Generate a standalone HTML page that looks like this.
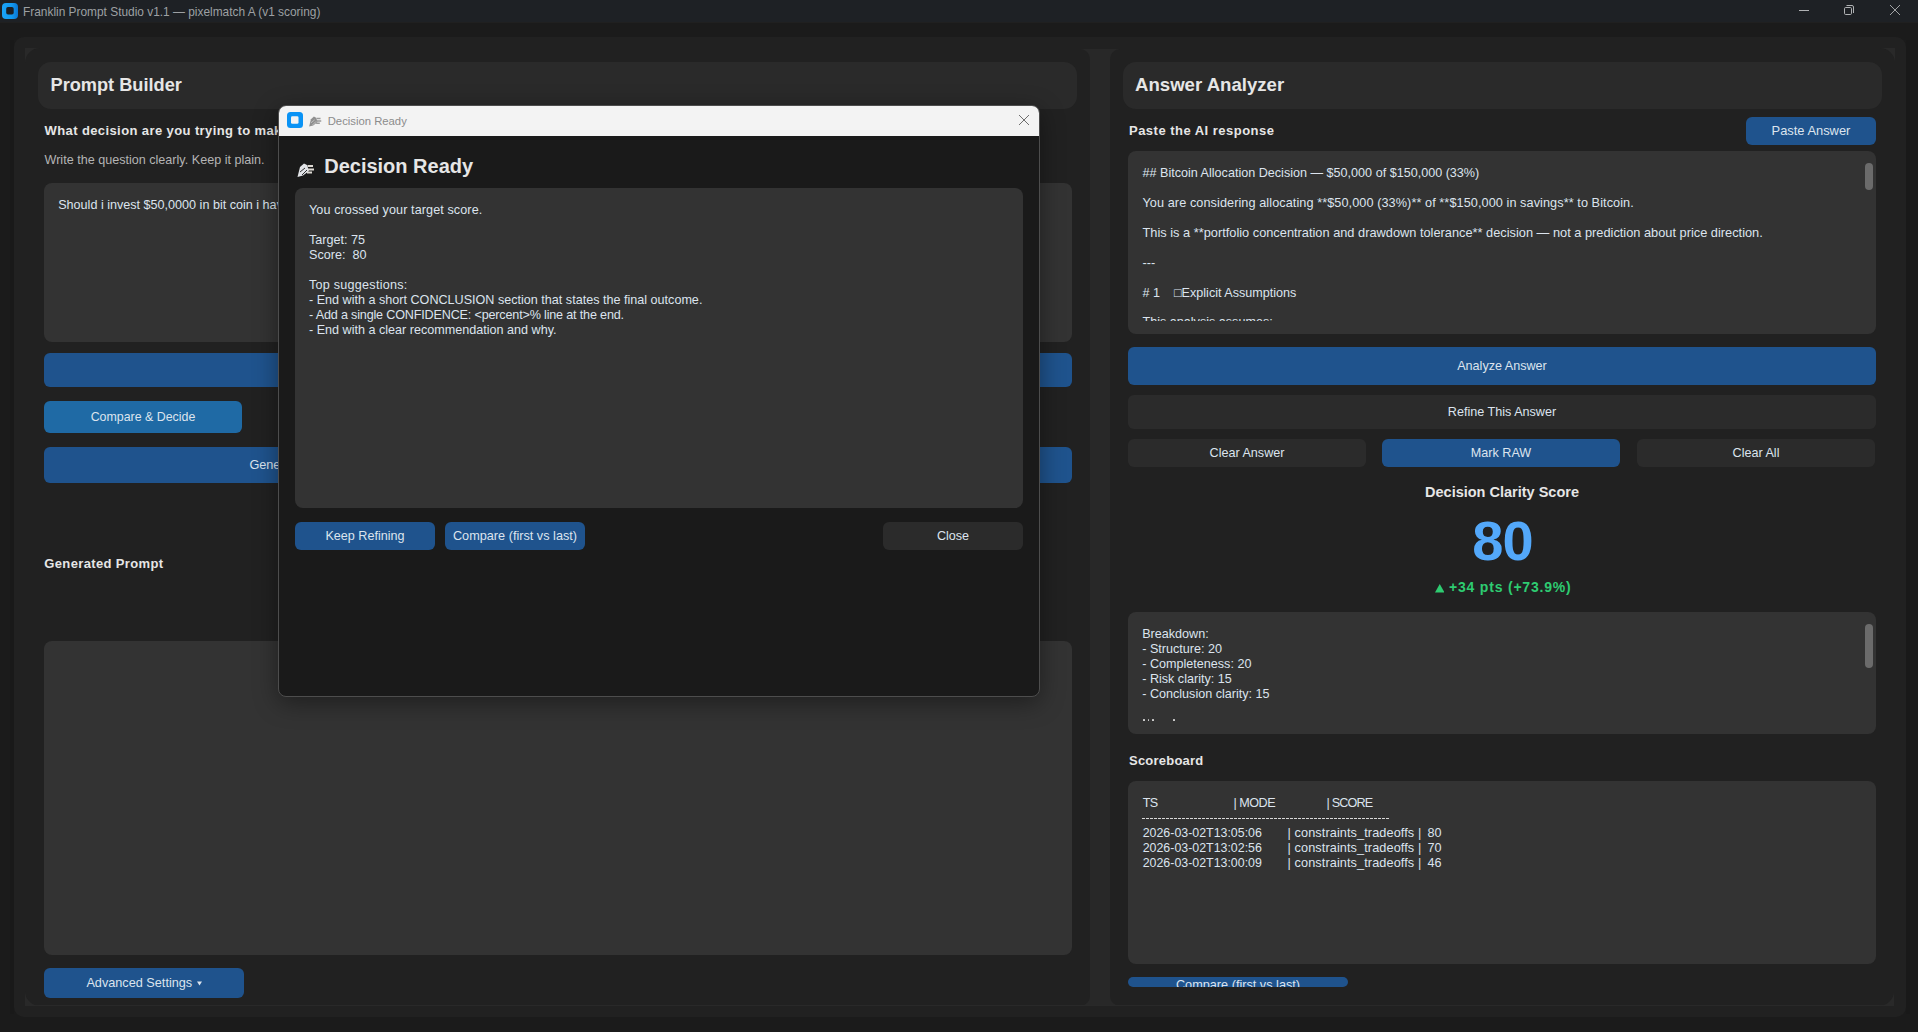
<!DOCTYPE html>
<html><head><meta charset="utf-8"><style>
html,body{margin:0;padding:0;width:1918px;height:1032px;overflow:hidden;background:#1b1b1b;font-family:"Liberation Sans",sans-serif}
body>div,body>svg{position:absolute}
.t{position:absolute;white-space:pre;line-height:20px}
</style></head><body>
<div style="left:0px;top:0px;width:1918px;height:23px;background:#1e2125;border-radius:0px;"></div>
<div style="left:0px;top:22px;width:1918px;height:1px;background:#202020;border-radius:0px;"></div>
<svg style="left:2px;top:3px" width="16" height="16" viewBox="0 0 16 16"><defs><linearGradient id="ig" x1="0" x2="1"><stop offset="0" stop-color="#1aa3f7"/><stop offset="0.6" stop-color="#1299f0"/><stop offset="1" stop-color="#0b76d2"/></linearGradient></defs><rect x="0" y="0" width="16" height="16" rx="4" fill="url(#ig)"/><rect x="4.2" y="4" width="7.5" height="7.5" rx="1.8" fill="#1c1f24"/></svg>
<div class="t" style="left:23.00px;top:2.00px;font-size:11.9px;font-weight:400;color:#9da0a3;">Franklin Prompt Studio v1.1 — pixelmatch A (v1 scoring)</div>
<svg style="left:1790px;top:0" width="128" height="23" viewBox="0 0 128 23"><line x1="9" y1="10.5" x2="19" y2="10.5" stroke="#b0b2b4" stroke-width="1"/><rect x="54.5" y="7.5" width="7" height="7" rx="1.2" fill="none" stroke="#b0b2b4" stroke-width="1"/><path d="M56.5 5.5 H62 a1.5 1.5 0 0 1 1.5 1.5 V13" fill="none" stroke="#b0b2b4" stroke-width="1"/><path d="M100 5 L110 15 M110 5 L100 15" stroke="#b0b2b4" stroke-width="0.9"/></svg>
<div style="left:10px;top:40px;width:4px;height:974px;background:#191919;border-radius:0px;"></div>
<div style="left:1906px;top:40px;width:4px;height:974px;background:#191919;border-radius:0px;"></div>
<div style="left:14px;top:37px;width:1892px;height:980px;background:#212121;border-radius:10px;"></div>
<div style="left:1074px;top:49px;width:52px;height:957px;background:#282828;border-radius:0px;"></div>
<div style="left:26px;top:49px;width:1064px;height:957px;background:#212121;border-radius:10px;"></div>
<div style="left:1110px;top:49px;width:784px;height:957px;background:#212121;border-radius:10px;"></div>
<div style="left:26px;top:1005px;width:1868px;height:1px;background:#292929;border-radius:0px;"></div>
<svg style="left:25px;top:48px;transform:scale(1,1)" width="15" height="15" viewBox="0 0 15 15"><path d="M0 0 H15 A15 15 0 0 0 0 15 Z" fill="#292929"/></svg>
<svg style="left:1880px;top:48px;transform:scale(-1,1)" width="15" height="15" viewBox="0 0 15 15"><path d="M0 0 H15 A15 15 0 0 0 0 15 Z" fill="#292929"/></svg>
<svg style="left:25px;top:991px;transform:scale(1,-1)" width="15" height="15" viewBox="0 0 15 15"><path d="M0 0 H15 A15 15 0 0 0 0 15 Z" fill="#292929"/></svg>
<svg style="left:1879px;top:991px;transform:scale(-1,-1)" width="15" height="15" viewBox="0 0 15 15"><path d="M0 0 H15 A15 15 0 0 0 0 15 Z" fill="#292929"/></svg>
<div style="left:38px;top:62px;width:1039px;height:47px;background:#2a2a2a;border-radius:13px;"></div>
<div class="t" style="left:50.50px;top:75.00px;font-size:18.2px;font-weight:700;color:#e6e6e6;">Prompt Builder</div>
<div class="t" style="left:44.50px;top:121.00px;font-size:13px;font-weight:700;color:#e6e6e6;letter-spacing:0.4px">What decision are you trying to make?</div>
<div class="t" style="left:44.50px;top:150.00px;font-size:12.6px;font-weight:400;color:#b4b4b4;">Write the question clearly. Keep it plain.</div>
<div style="left:44px;top:183px;width:1028px;height:159px;background:#333333;border-radius:8px;"></div>
<div class="t" style="left:58.20px;top:195.00px;font-size:12.6px;font-weight:400;color:#dce4ee;">Should i invest $50,0000 in bit coin i have $150,000 in savings</div>
<div style="left:44px;top:353px;width:1028px;height:34px;background:#1f538d;border-radius:6px;"></div>
<div style="left:44px;top:401px;width:198px;height:32px;background:#1f6aa5;border-radius:6px;"></div>
<div class="t" style="left:43.00px;top:407.00px;width:200px;text-align:center;font-size:12.4px;font-weight:400;color:#dce4ee;">Compare &amp; Decide</div>
<div style="left:44px;top:447px;width:1028px;height:36px;background:#1f538d;border-radius:6px;"></div>
<div class="t" style="left:249.40px;top:455.00px;font-size:12.7px;font-weight:400;color:#dce4ee;">Generate Prompt (copy into ChatGPT / Claude / Gemini and paste the answer)</div>
<div class="t" style="left:44.30px;top:554.00px;font-size:13px;font-weight:700;color:#e6e6e6;letter-spacing:0.36px">Generated Prompt</div>
<div style="left:44px;top:641px;width:1028px;height:314px;background:#333333;border-radius:8px;"></div>
<div style="left:44px;top:968px;width:200px;height:30px;background:#1f538d;border-radius:6px;"></div>
<div class="t" style="left:86.40px;top:973.00px;font-size:12.7px;font-weight:400;color:#dce4ee;">Advanced Settings</div>
<svg style="left:196.5px;top:981px" width="5" height="5" viewBox="0 0 5 5"><path d="M0 0.5 H5 L2.5 4.5 Z" fill="#dce4ee"/></svg>
<div style="left:1123px;top:62px;width:759px;height:47px;background:#2a2a2a;border-radius:13px;"></div>
<div class="t" style="left:1135.00px;top:75.00px;font-size:18.6px;font-weight:700;color:#e6e6e6;">Answer Analyzer</div>
<div class="t" style="left:1129.00px;top:121.00px;font-size:13px;font-weight:700;color:#e6e6e6;letter-spacing:0.48px">Paste the AI response</div>
<div style="left:1746px;top:117px;width:130px;height:28px;background:#1f538d;border-radius:6px;"></div>
<div class="t" style="left:1746.00px;top:121.00px;width:130px;text-align:center;font-size:12.9px;font-weight:400;color:#dce4ee;">Paste Answer</div>
<div style="left:1128px;top:151px;width:748px;height:183px;background:#333333;border-radius:8px;"></div>
<div style="left:1865px;top:163px;width:8px;height:27px;background:#6b6b6b;border-radius:4px;"></div>
<div class="t" style="left:1142.50px;top:163.00px;font-size:12.6px;font-weight:400;color:#dce4ee;">## Bitcoin Allocation Decision — $50,000 of $150,000 (33%)</div>
<div class="t" style="left:1142.50px;top:193.00px;font-size:12.7px;font-weight:400;color:#dce4ee;letter-spacing:0.075px">You are considering allocating **$50,000 (33%)** of **$150,000 in savings** to Bitcoin.</div>
<div class="t" style="left:1142.50px;top:223.00px;font-size:12.8px;font-weight:400;color:#dce4ee;">This is a **portfolio concentration and drawdown tolerance** decision — not a prediction about price direction.</div>
<div class="t" style="left:1142.50px;top:253.00px;font-size:12.6px;font-weight:400;color:#dce4ee;">---</div>
<div class="t" style="left:1142.50px;top:283.00px;font-size:12.6px;font-weight:400;color:#dce4ee;"># 1    □Explicit Assumptions</div>
<div style="left:1128px;top:314px;width:700px;height:7px;overflow:hidden"><div class="t" style="left:14.5px;top:-2px;font-size:12.6px;color:#dce4ee;line-height:20px">This analysis assumes:</div></div>
<div style="left:1128px;top:347px;width:748px;height:38px;background:#1f538d;border-radius:6px;"></div>
<div class="t" style="left:1352.00px;top:356.00px;width:300px;text-align:center;font-size:12.6px;font-weight:400;color:#dce4ee;">Analyze Answer</div>
<div style="left:1128px;top:395px;width:748px;height:34px;background:#2b2b2b;border-radius:6px;"></div>
<div class="t" style="left:1352.00px;top:402.00px;width:300px;text-align:center;font-size:12.6px;font-weight:400;color:#dce4ee;">Refine This Answer</div>
<div style="left:1128px;top:439px;width:238px;height:28px;background:#2b2b2b;border-radius:6px;"></div>
<div class="t" style="left:1128.00px;top:443.00px;width:238px;text-align:center;font-size:12.6px;font-weight:400;color:#dce4ee;">Clear Answer</div>
<div style="left:1382px;top:439px;width:238px;height:28px;background:#1f538d;border-radius:6px;"></div>
<div class="t" style="left:1382.00px;top:443.00px;width:238px;text-align:center;font-size:12.6px;font-weight:400;color:#dce4ee;">Mark RAW</div>
<div style="left:1637px;top:439px;width:238px;height:28px;background:#2b2b2b;border-radius:6px;"></div>
<div class="t" style="left:1637.00px;top:443.00px;width:238px;text-align:center;font-size:12.6px;font-weight:400;color:#dce4ee;">Clear All</div>
<div class="t" style="left:1302.00px;top:482.00px;width:400px;text-align:center;font-size:14.5px;font-weight:700;color:#e6e6e6;">Decision Clarity Score</div>
<div class="t" style="left:1303.00px;top:531.00px;width:400px;text-align:center;font-size:56px;font-weight:700;color:#53a8fa;letter-spacing:-1px;text-indent:-1px">80</div>
<svg style="left:1434.5px;top:584px" width="9.5" height="8.5" viewBox="0 0 9.5 8.5"><path d="M4.75 0 L9.5 8.5 H0 Z" fill="#2ecc71"/></svg>
<div class="t" style="left:1449.00px;top:577.00px;font-size:14px;font-weight:700;color:#2ecc71;letter-spacing:0.8px">+34 pts (+73.9%)</div>
<div style="left:1128px;top:612px;width:748px;height:122px;background:#333333;border-radius:8px;"></div>
<div style="left:1865px;top:624px;width:8px;height:44px;background:#6b6b6b;border-radius:4px;"></div>
<div class="t" style="left:1142.20px;top:624.00px;font-size:12.6px;font-weight:400;color:#dce4ee;">Breakdown:</div>
<div class="t" style="left:1142.20px;top:639.00px;font-size:12.6px;font-weight:400;color:#dce4ee;">- Structure: 20</div>
<div class="t" style="left:1142.20px;top:654.00px;font-size:12.6px;font-weight:400;color:#dce4ee;">- Completeness: 20</div>
<div class="t" style="left:1142.20px;top:669.00px;font-size:12.6px;font-weight:400;color:#dce4ee;">- Risk clarity: 15</div>
<div class="t" style="left:1142.20px;top:684.00px;font-size:12.6px;font-weight:400;color:#dce4ee;">- Conclusion clarity: 15</div>
<div style="left:1143px;top:719px;width:1.599999999999909px;height:2px;background:#d0d0d0;border-radius:0.5px;"></div>
<div style="left:1147.5px;top:719px;width:1.599999999999909px;height:2px;background:#d0d0d0;border-radius:0.5px;"></div>
<div style="left:1152px;top:719px;width:1.599999999999909px;height:2px;background:#d0d0d0;border-radius:0.5px;"></div>
<div style="left:1173px;top:719px;width:1.599999999999909px;height:2px;background:#d0d0d0;border-radius:0.5px;"></div>
<div class="t" style="left:1129.00px;top:751.00px;font-size:13px;font-weight:700;color:#e6e6e6;letter-spacing:0.22px">Scoreboard</div>
<div style="left:1128px;top:781px;width:748px;height:183px;background:#333333;border-radius:8px;"></div>
<div class="t" style="left:1142.70px;top:793.00px;font-size:12.6px;font-weight:400;color:#dce4ee;letter-spacing:-0.6px">TS</div>
<div class="t" style="left:1233.50px;top:793.00px;font-size:12.6px;font-weight:400;color:#dce4ee;letter-spacing:-0.5px">| MODE</div>
<div class="t" style="left:1326.60px;top:793.00px;font-size:12.6px;font-weight:400;color:#dce4ee;letter-spacing:-0.85px">| SCORE</div>
<div style="left:1142px;top:818px;width:248px;height:1px;background:repeating-linear-gradient(90deg,#d8d8d8 0 3px,transparent 3px 4px);border-radius:0px;"></div>
<div class="t" style="left:1142.70px;top:823.00px;font-size:12.4px;font-weight:400;color:#dce4ee;">2026-03-02T13:05:06</div>
<div class="t" style="left:1287.60px;top:823.00px;font-size:12.7px;font-weight:400;color:#dce4ee;letter-spacing:0.1px">| constraints_tradeoffs |</div>
<div class="t" style="left:1427.60px;top:823.00px;font-size:12.6px;font-weight:400;color:#dce4ee;">80</div>
<div class="t" style="left:1142.70px;top:838.00px;font-size:12.4px;font-weight:400;color:#dce4ee;">2026-03-02T13:02:56</div>
<div class="t" style="left:1287.60px;top:838.00px;font-size:12.7px;font-weight:400;color:#dce4ee;letter-spacing:0.1px">| constraints_tradeoffs |</div>
<div class="t" style="left:1427.60px;top:838.00px;font-size:12.6px;font-weight:400;color:#dce4ee;">70</div>
<div class="t" style="left:1142.70px;top:853.00px;font-size:12.4px;font-weight:400;color:#dce4ee;">2026-03-02T13:00:09</div>
<div class="t" style="left:1287.60px;top:853.00px;font-size:12.7px;font-weight:400;color:#dce4ee;letter-spacing:0.1px">| constraints_tradeoffs |</div>
<div class="t" style="left:1427.60px;top:853.00px;font-size:12.6px;font-weight:400;color:#dce4ee;">46</div>
<div style="left:1128px;top:977px;width:220px;height:10px;overflow:hidden;background:#1f538d;border-radius:5px"><div class="t" style="left:0;top:-2px;width:220px;text-align:center;font-size:12.7px;color:#dce4ee;line-height:20px">Compare (first vs last)</div></div>
<div style="left:278px;top:105px;width:762px;height:592px;border-radius:8px;box-shadow:0 6px 24px rgba(0,0,0,0.4);border:1px solid #4d4d4d;box-sizing:border-box;background:#1a1a1a"></div>
<div style="left:279px;top:106px;width:760px;height:30px;background:#f3f3f3;border-radius:0px;border-radius:7px 7px 0 0"></div>
<svg style="left:287px;top:112px" width="16" height="16" viewBox="0 0 16 16"><rect x="0" y="0" width="16" height="16" rx="3.5" fill="#0a93f5"/><rect x="4" y="4.3" width="7.5" height="7.5" rx="1.3" fill="#f3f3f3"/></svg>
<svg style="left:308px;top:114px" width="14" height="14" viewBox="0 0 19 19"><path d="M1.5 17 L4 7 L8 3.5 L11 5 L13 11 L7 15.5 Z" fill="#8f8f8f"/><path d="M11.5 6 H17 M12 9.5 H18 M11 12.5 H16" stroke="#9a9a9a" stroke-width="2"/><path d="M4 12 L9 8 M6 15 L11 10" stroke="#cfcfcf" stroke-width="1"/></svg>
<div class="t" style="left:327.70px;top:111.00px;font-size:11.3px;font-weight:400;color:#8c8c8c;">Decision Ready</div>
<svg style="left:1019px;top:115px" width="10" height="10" viewBox="0 0 10 10"><path d="M0 0 L10 10 M10 0 L0 10" stroke="#6e6e6e" stroke-width="1"/></svg>
<svg style="left:296px;top:160px" width="19" height="19" viewBox="0 0 19 19"><path d="M1.5 17 L4 7 L8 3.5 L11 5 L13 11 L7 15.5 Z" fill="#e2e4e8"/><path d="M11.5 6 H17 M12 9.5 H18 M11 12.5 H16" stroke="#dedad4" stroke-width="2"/><path d="M4 12 L9 8 M6 15 L11 10" stroke="#1a1a1a" stroke-width="0.9"/></svg>
<div class="t" style="left:324.20px;top:156.00px;font-size:20px;font-weight:700;color:#e6e6e6;">Decision Ready</div>
<div style="left:295px;top:188px;width:728px;height:320px;background:#333333;border-radius:8px;"></div>
<div class="t" style="left:309.00px;top:200.00px;font-size:12.6px;font-weight:400;color:#dce4ee;letter-spacing:0.1px">You crossed your target score.</div>
<div class="t" style="left:309.00px;top:230.00px;font-size:12.6px;font-weight:400;color:#dce4ee;letter-spacing:0px">Target: 75</div>
<div class="t" style="left:309.00px;top:245.00px;font-size:12.6px;font-weight:400;color:#dce4ee;letter-spacing:0px">Score:  80</div>
<div class="t" style="left:309.00px;top:275.00px;font-size:12.6px;font-weight:400;color:#dce4ee;letter-spacing:0.25px">Top suggestions:</div>
<div class="t" style="left:309.00px;top:290.00px;font-size:12.6px;font-weight:400;color:#dce4ee;letter-spacing:0px">- End with a short CONCLUSION section that states the final outcome.</div>
<div class="t" style="left:309.00px;top:305.00px;font-size:12.6px;font-weight:400;color:#dce4ee;letter-spacing:-0.17px">- Add a single CONFIDENCE: &lt;percent&gt;% line at the end.</div>
<div class="t" style="left:309.00px;top:320.00px;font-size:12.6px;font-weight:400;color:#dce4ee;letter-spacing:0px">- End with a clear recommendation and why.</div>
<div style="left:295px;top:522px;width:140px;height:28px;background:#1f538d;border-radius:6px;"></div>
<div class="t" style="left:295.00px;top:526.00px;width:140px;text-align:center;font-size:12.6px;font-weight:400;color:#dce4ee;">Keep Refining</div>
<div style="left:445px;top:522px;width:140px;height:28px;background:#1f538d;border-radius:6px;"></div>
<div class="t" style="left:445.00px;top:526.00px;width:140px;text-align:center;font-size:12.7px;font-weight:400;color:#dce4ee;">Compare (first vs last)</div>
<div style="left:883px;top:522px;width:140px;height:28px;background:#2b2b2b;border-radius:6px;"></div>
<div class="t" style="left:883.00px;top:526.00px;width:140px;text-align:center;font-size:12.6px;font-weight:400;color:#dce4ee;">Close</div>
</body></html>
